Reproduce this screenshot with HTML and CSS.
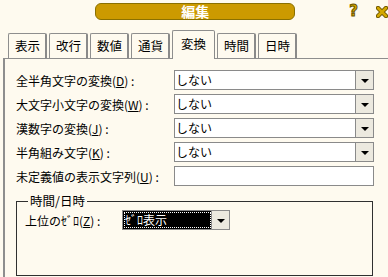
FILE: index.html
```html
<!DOCTYPE html>
<html lang="ja">
<head>
  <meta charset="UTF-8" />
  <title>編集</title>
  <link rel="stylesheet" href="styles.css">
</head>
<body>

  <div class="header">
    <div class="title-bar">編集</div>
    <div class="header-icons">
      <span class="help-icon">?</span>
      <svg class="close-icon" width="12" height="12" viewBox="0 0 12 12">
        <path d="M2 2 L10 10 M10 2 L2 10" stroke="#6b5400" stroke-width="4.5" stroke-linecap="round"/>
        <path d="M2 2 L10 10 M10 2 L2 10" stroke="#d4a800" stroke-width="2.5" stroke-linecap="round"/>
      </svg>
    </div>
  </div>

  <div class="tabs">
    <div class="tab">表示</div>
    <div class="tab">改行</div>
    <div class="tab">数値</div>
    <div class="tab">通貨</div>
    <div class="tab active">変換</div>
    <div class="tab">時間</div>
    <div class="tab">日時</div>
  </div>

  <div class="panel">
    <div class="form-rows">
      <div class="row">
        <label>全半角文字の変換(<u>D</u>) :</label>
        <div class="combo"><span class="combo-text">しない</span><span class="combo-btn"><i class="arrow"></i></span></div>
      </div>
      <div class="row">
        <label>大文字小文字の変換(<u>W</u>) :</label>
        <div class="combo"><span class="combo-text">しない</span><span class="combo-btn"><i class="arrow"></i></span></div>
      </div>
      <div class="row">
        <label>漢数字の変換(<u>J</u>) :</label>
        <div class="combo"><span class="combo-text">しない</span><span class="combo-btn"><i class="arrow"></i></span></div>
      </div>
      <div class="row">
        <label>半角組み文字(<u>K</u>) :</label>
        <div class="combo"><span class="combo-text">しない</span><span class="combo-btn"><i class="arrow"></i></span></div>
      </div>
      <div class="row">
        <label>未定義値の表示文字列(<u>U</u>) :</label>
        <div class="text-input"></div>
      </div>
    </div>

    <fieldset class="group">
      <legend>時間/日時</legend>
      <div class="group-row">
        <label>上位のｾﾞﾛ(<u>Z</u>) :</label>
        <div class="combo small"><span class="combo-text selected">ｾﾞﾛ表示</span><span class="combo-btn"><i class="arrow"></i></span></div>
      </div>
    </fieldset>
  </div>

</body>
</html>
```

FILE: styles.css
```css
body {
  margin: 0;
  background: #fefaef;
  font-family: "Noto Sans CJK JP", "Noto Sans", sans-serif;
  font-size: 12px;
  color: #000;
  height: 277px;
  overflow: hidden;
}

.header {
  display: flex;
  align-items: flex-start;
  height: 31px;
}

.title-bar {
  margin: 3px 0 0 95px;
  width: 202px;
  height: 15px;
  line-height: 15px;
  background: #cc9a00;
  border: 1px solid #8a7000;
  border-radius: 6px;
  color: #fff;
  font-weight: bold;
  font-size: 14px;
  text-align: center;
}

.header-icons {
  display: flex;
  align-items: center;
  gap: 18px;
  margin: 4px 0 0 54px;
}

.help-icon {
  font-family: "DejaVu Sans", sans-serif;
  font-weight: bold;
  font-size: 15px;
  line-height: 15px;
  color: #d4a800;
  -webkit-text-stroke: 1px #6b5400;
}

.tabs {
  display: flex;
  align-items: flex-end;
  gap: 2px;
  padding-left: 8px;
  height: 27px;
  position: relative;
  z-index: 1;
}

.tab {
  height: 24px;
  line-height: 24px;
  padding: 0 5px 0 6px;
  border: 1px solid #8e8e8e;
  border-right: 2px solid #8a8a8a;
  border-bottom: none;
  border-radius: 2px 2px 0 0;
  background: #fefaef;
  font-size: 12.5px;
}

.tab.active {
  height: 28px;
  line-height: 25px;
  padding: 0 8px;
  margin-bottom: -1px;
  border-right: 1px solid #8a8a8a;
}

.panel {
  margin-left: 3px;
  border-top: 1px solid #8e8e8e;
  border-left: 2px solid #8e8e8e;
  padding: 11px 0 0 11px;
  height: 207px;
}

.form-rows {
  display: flex;
  flex-direction: column;
  gap: 4px;
}

.row {
  display: flex;
  align-items: center;
  height: 20px;
}

.row label {
  width: 158px;
  white-space: nowrap;
}

.combo {
  display: flex;
  width: 198px;
  height: 18px;
  border: 1px solid #8a8a8a;
  background: #fff;
}

.combo-text {
  flex: 1;
  line-height: 17px;
  padding-left: 1px;
  border-right: 1px solid #8a8a8a;
}

.combo-btn {
  width: 17px;
  background: #ece9df;
  display: flex;
  align-items: center;
  justify-content: center;
}

.arrow {
  width: 0;
  height: 0;
  border-left: 4px solid transparent;
  border-right: 4px solid transparent;
  border-top: 4px solid #000;
  margin-top: 2px;
}

.text-input {
  width: 198px;
  height: 18px;
  border: 1px solid #8a8a8a;
  background: #fff;
}

.group {
  box-sizing: border-box;
  margin: 8px 0 0 0;
  width: 357px;
  height: 82px;
  min-height: 82px;
  padding: 0 0 0 8px;
  border: 1px solid #303030;
  border-radius: 0;
}

.group legend {
  padding: 0 2px;
  margin-left: 3px;
  font-size: 12.5px;
  line-height: 14px;
}

.group-row {
  display: flex;
  align-items: center;
  margin-top: 2px;
  height: 20px;
}

.group-row label {
  width: 97px;
  white-space: nowrap;
}

.combo.small {
  width: 106px;
}

.combo-text.selected {
  background: #000;
  color: #fff;
  outline: 1px dotted #fff;
  outline-offset: -2px;
  padding-left: 2px;
}
```
